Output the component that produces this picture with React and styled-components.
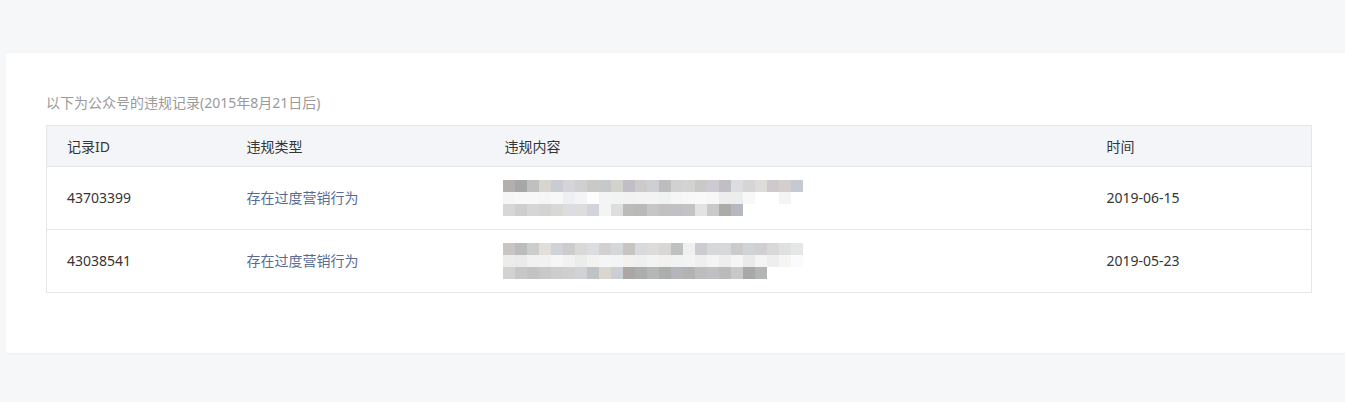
import React from 'react';
import styled, { createGlobalStyle } from 'styled-components';

const GlobalStyle = createGlobalStyle`
  html, body {
    margin: 0;
    padding: 0;
    background: #f6f7f9;
    overflow: hidden;
  }
  body {
    font-family: "Noto Sans", "Noto Sans CJK SC", sans-serif;
    color: #353535;
  }
`;

const Page = styled.div`
  padding: 53px 0 49px 6px;
  min-height: 402px;
  box-sizing: border-box;
`;

const Card = styled.section`
  width: 1346px;
  box-sizing: border-box;
  background: #fff;
  border-radius: 3px;
  box-shadow: 0 1px 2px rgba(0, 0, 0, 0.04);
  padding: 40px 40px 60px;
`;

const Caption = styled.p`
  margin: 0 0 12px;
  font-size: 14px;
  line-height: 20px;
  color: #9a9a9a;
`;

const Table = styled.table`
  width: 1266px;
  border-collapse: collapse;
  table-layout: fixed;
  border: 1px solid #e4e6ea;
  font-size: 14px;
`;

const HeadCell = styled.th`
  height: 40px;
  padding: 0 20px;
  text-align: left;
  font-weight: 400;
  color: #353535;
  background: #f4f5f9;
  border-bottom: 1px solid #e4e6ea;
  vertical-align: middle;
`;

const Cell = styled.td`
  height: 62px;
  padding: 0 20px;
  color: ${(p) => (p.$link ? '#576b95' : '#353535')};
  border-top: 1px solid #e4e6ea;
  vertical-align: middle;
  line-height: 0;
  & > span {
    line-height: 20px;
  }
`;

const rows = [
  {
    id: '43703399',
    type: '存在过度营销行为',
    date: '2019-06-15',
    mosaic: [
      'b3afad a6a8a7 c0c0c0 d8d4d0 c9ccd2 d5d5d8 d0d0d0 c9c9c6 c5c9c9 d3d3cd c1bfc5 cdcbc9 cdcfd5 bdbdbd d1d1d1 d3d3d1 c9c9c5 cdcbd1 c1bfc3 dcdde0 d5d5d5 dddcd8 cdc9cd d3cfcf c5c9d1',
      'f6f6f6 f8f8f8 f8f8f8 f6f6f6 f8f8f8 eeeff2 f4f4f6 fdfdfd f5f4f4 f2f3f3 f3f2f2 f3f3f3 f2f3f3 f0f1f1 f6f6f6 f8f8f8 f9f9f9 f7f7f7 ededee eceeee f8f8f8 fff fff f4f4f4 fff',
      'd7d7d7 cfcecf d5d6d5 d3d3d3 d8d8d5 dcdde0 dddddd d1d4da f4f4f4 dededc bbbbb8 b9b9bc c6c6c6 c2c0c0 c0c1c4 c4c3c2 e3e3e3 cacaca acaba9 b5b8c0',
    ],
  },
  {
    id: '43038541',
    type: '存在过度营销行为',
    date: '2019-05-23',
    mosaic: [
      'c9c5c3 bbbdbd cbcccc e2dfdb cfd2d6 ccccce d9d9d7 dcdde0 d2d0d1 d5d8da c8c4c1 d9dadd dddcda d8d7d6 bfc1c1 f0f0f0 ccccd0 d7d8da d7d8da cbcbcb d1d4d6 d1cfd1 d8d8d8 dfe0e0 e5e7e7',
      'ececea e9ebeb f1f1f1 f1f1f1 f6f6f6 f2f2f2 ebedec f2f2f0 f4f5f7 f4f3f5 f2f1f0 eff0f2 f3f3f3 f2f1f0 f1f2f2 f3f3f3 efefef f3f4f3 eeeeef f5f5f5 eaeaea f4f4f4 eeeeee f5f5f3 fafbfc',
      'd2d3d0 c8c6c7 c3c3c6 c8c9c6 cecdcd cfcfcf d1d2d6 c0c3c3 d9d6d0 cbced3 aca7a5 acadad b5b7b5 acadad b5b5bb b0b3b0 bdbdbd c0c0c4 bbbbbd c8c8c8 aaa7a8 b2b5b6',
    ],
  },
];

const MosaicSvg = styled.svg`
  display: block;
  margin-left: -2px;
  shape-rendering: crispEdges;
`;

const Mosaic = ({ lines }) => {
  const size = 12;
  return (
    <MosaicSvg width={300} height={36} viewBox="0 0 300 36">
      {lines.map((line, r) =>
        line.split(' ').map((c, i) => (
          <rect key={`${r}-${i}`} x={i * size} y={r * size} width={size} height={size} fill={`#${c}`} />
        ))
      )}
    </MosaicSvg>
  );
};

const App = () => (
  <Page>
    <GlobalStyle />
    <Card>
      <Caption>以下为公众号的违规记录(2015年8月21日后)</Caption>
      <Table>
        <colgroup>
          <col style={{ width: 180 }} />
          <col style={{ width: 258 }} />
          <col style={{ width: 602 }} />
          <col />
        </colgroup>
        <thead>
          <tr>
            <HeadCell>记录ID</HeadCell>
            <HeadCell>违规类型</HeadCell>
            <HeadCell>违规内容</HeadCell>
            <HeadCell>时间</HeadCell>
          </tr>
        </thead>
        <tbody>
          {rows.map((row) => (
            <tr key={row.id}>
              <Cell><span>{row.id}</span></Cell>
              <Cell $link><span>{row.type}</span></Cell>
              <Cell><Mosaic lines={row.mosaic} /></Cell>
              <Cell><span>{row.date}</span></Cell>
            </tr>
          ))}
        </tbody>
      </Table>
    </Card>
  </Page>
);

export default App;
